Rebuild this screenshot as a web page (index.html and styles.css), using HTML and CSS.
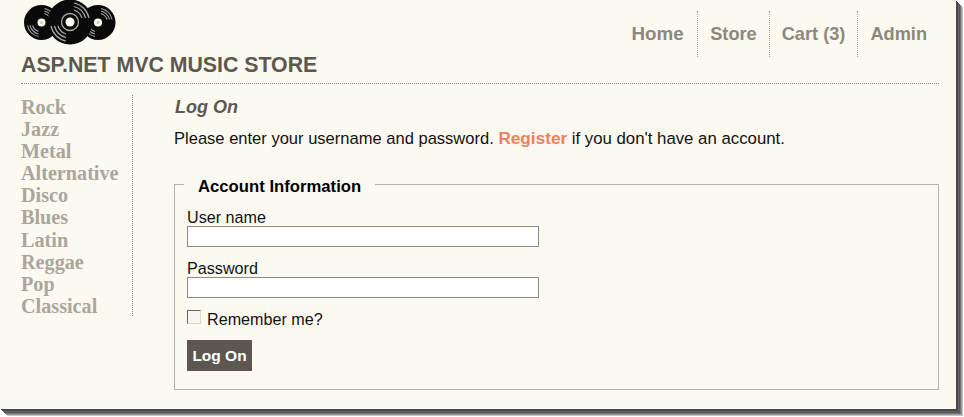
FILE: index.html
```html
<!DOCTYPE html>
<html lang="en">
<head>
<meta charset="utf-8">
<title>Log On - ASP.NET MVC Music Store</title>
<link rel="stylesheet" href="styles.css">
</head>
<body>
<div class="frame">
  <header class="header">
    <div class="brand">
      <svg class="logo" width="92" height="45" viewBox="0 0 92 45" aria-hidden="true">
        <defs>
          <g id="disc-small">
            <circle r="17.500" fill="#0a0a0a"/>
            <g fill="none" stroke="#a0a0a0" stroke-width="1.100">
              <path d="M3 -14A14.500 14.500 0 0 1 14 -3M3 -11.500A12 12 0 0 1 11.500 -3M3 -9A9.500 9.500 0 0 1 9 -3"/>
              <path d="M-3 14A14.500 14.500 0 0 1 -14 3M-3 11.500A12 12 0 0 1 -11.500 3M-3 9A9.500 9.500 0 0 1 -9 3"/>
            </g>
            <circle r="4" fill="#fdfaf1"/>
            <circle r="1.500" fill="#0a0a0a" opacity=".2"/>
          </g>
        </defs>
        <use href="#disc-small" x="17.500" y="22.500"/>
        <use href="#disc-small" x="74" y="22.500"/>
        <circle cx="46" cy="22" r="22.500" fill="#0a0a0a"/>
        <g fill="none" stroke="#a8a8a8" stroke-width="1.200">
          <path d="M50 3A19.500 19.500 0 0 1 65 18M50 6.500A16 16 0 0 1 61.500 18M50 10A12.500 12.500 0 0 1 58 18"/>
          <path d="M42 41A19.500 19.500 0 0 1 27 26M42 37.500A16 16 0 0 1 30.500 26M42 34A12.500 12.500 0 0 1 34 26"/>
        </g>
        <circle cx="46" cy="22" r="8.500" fill="none" stroke="#a8a8a8" stroke-width="1.300"/>
        <circle cx="46" cy="22" r="4.500" fill="#fdfaf1"/>
      </svg>
      <h1 class="title">ASP.NET MVC MUSIC STORE</h1>
    </div>
    <nav class="nav">
      <a class="nav-link nav-home">Home</a>
      <a class="nav-link nav-store">Store</a>
      <a class="nav-link nav-cart">Cart (3)</a>
      <a class="nav-link nav-admin">Admin</a>
    </nav>
  </header>
  <div class="body">
    <ul class="genres">
      <li>Rock</li>
      <li>Jazz</li>
      <li>Metal</li>
      <li>Alternative</li>
      <li>Disco</li>
      <li>Blues</li>
      <li>Latin</li>
      <li>Reggae</li>
      <li>Pop</li>
      <li>Classical</li>
    </ul>
    <main class="main">
      <h2 class="heading">Log On</h2>
      <p class="intro">Please enter your username and password. <a class="register">Register</a> <span class="intro-end">if you don't have an account.</span></p>
      <form class="form">
        <fieldset class="fieldset">
          <legend class="legend">Account Information</legend>
          <label class="label" for="user">User name</label>
          <input class="input" id="user" type="text">
          <label class="label" for="pass">Password</label>
          <input class="input" id="pass" type="password">
          <div class="remember">
            <span class="check"></span>
            <span>Remember me?</span>
          </div>
          <button class="button" type="button">Log On</button>
        </fieldset>
      </form>
    </main>
  </div>
</div>
</body>
</html>
```
FILE: styles.css
```css
* {
  box-sizing: border-box;
}

html,
body {
  margin: 0;
  padding: 0;
  background: #fff;
}

body {
  width: 964px;
  height: 417px;
  overflow: hidden;
  font-family: "Liberation Sans", Arial, sans-serif;
  color: #111;
}

.frame {
  width: 956px;
  height: 409px;
  padding: 0 17px 0 21px;
  background: #fcf9f0;
  box-shadow:
    1px 1px 0 #4a4a4a,
    2px 2px 0 #444,
    3px 3px 0 #666,
    4px 4px 0 #555,
    5px 5px 0 #777,
    6px 6px 0 #999,
    7px 7px 0 #c4c4c4;
}

.header {
  height: 84px;
  display: flex;
  justify-content: space-between;
  border-bottom: 1px dotted #8f8b80;
}

.brand {
  display: flex;
  flex-direction: column;
}

.logo {
  display: block;
  margin-left: 3px;
}

.title {
  margin: 8px 0 0;
  font-size: 21.300px;
  line-height: 24px;
  font-weight: 700;
  color: #5c5850;
}

.nav {
  display: flex;
  align-items: flex-start;
  padding-top: 11px;
}

.nav-link {
  height: 46px;
  line-height: 46px;
  font-size: 18.200px;
  font-weight: 700;
  color: #8b887c;
  border-left: 1px dotted #aaa69a;
  padding: 0 12px;
}

.nav-home {
  border-left: 0;
  font-size: 18.800px;
  padding-right: 13px;
}

.nav-store {
  padding-left: 12.500px;
}

.body {
  display: flex;
  padding-top: 11px;
}

.genres {
  width: 112px;
  height: 221px;
  margin: 0;
  padding: 1px 0 0;
  list-style: none;
  border-right: 1px dotted #8f8b80;
  font-family: "Liberation Serif", "Times New Roman", serif;
  font-size: 20.200px;
  line-height: 22.100px;
  font-weight: 700;
  color: #aaa69c;
}

.main {
  flex: 1;
  margin-left: 41px;
  padding-top: 1px;
  min-width: 0;
}

.heading {
  margin: 0;
  padding-left: 1px;
  font-size: 18px;
  line-height: 22px;
  font-style: italic;
  font-weight: 700;
  color: #5c5850;
}

.intro {
  height: 20px;
  margin: 10px 0 0;
  font-size: 16.550px;
  line-height: 20px;
}

.register {
  font-size: 17.200px;
  font-weight: 700;
  color: #ee805d;
}

.intro-end {
  font-size: 16.800px;
}

.form {
  margin-top: 25px;
}

.fieldset {
  height: 217px;
  margin: 0;
  padding: 0 0 0 12px;
  border: 1px solid #b5b3a7;
  min-width: 0;
}

.legend {
  margin-left: -3px;
  padding: 4px 14px 0;
  font-size: 16.700px;
  line-height: 19px;
  font-weight: 700;
  color: #000;
}

.label {
  display: block;
  margin-top: 12px;
  font-size: 16.150px;
  line-height: 18px;
}

.input {
  display: block;
  width: 352px;
  height: 21px;
  margin: 0;
  padding: 0;
  background: #fff;
  border: 1px solid #8f8b7f;
}

.remember {
  display: flex;
  align-items: flex-start;
  gap: 6px;
  height: 19px;
  margin-top: 12px;
  font-size: 16.150px;
  line-height: 19px;
}

.check {
  width: 14px;
  height: 14px;
  background: #f7f5ef;
  border: 1px solid #d8d6ce;
  border-top-color: #666;
  border-left-color: #666;
}

.button {
  display: block;
  width: 65px;
  height: 31px;
  margin: 11px 0 0;
  padding: 0;
  border: 0;
  background: #5c574f;
  color: #fff;
  font-family: "Liberation Sans", Arial, sans-serif;
  font-size: 15.500px;
  font-weight: 700;
}
```
